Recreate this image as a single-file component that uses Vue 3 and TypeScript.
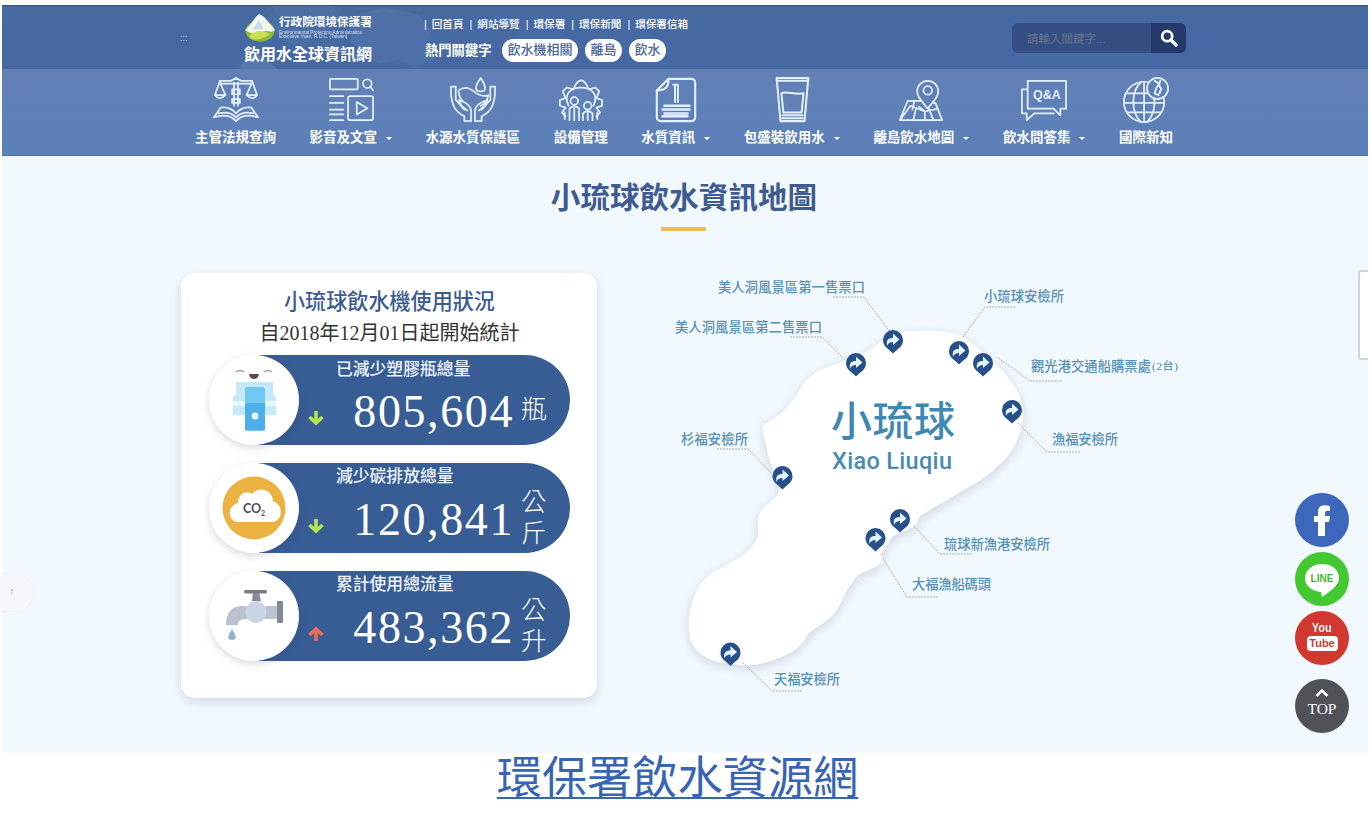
<script setup lang="ts">
interface NavItem { label: string; icon: string; menu: boolean }
interface Stat { label: string; value: string; unit: string; icon: 'machine' | 'co2' | 'tap'; up: boolean }
interface Place { name: string; note?: string; x: number; y: number; w: number; pin: [number, number]; line: string }

const topLinks: string[] = ['回首頁', '網站導覽', '環保署', '環保新聞', '環保署信箱']
const keywords: string[] = ['飲水機相關', '離島', '飲水']

const navItems: NavItem[] = [
  { label: '主管法規查詢', icon: 'law', menu: false },
  { label: '影音及文宣', icon: 'media', menu: true },
  { label: '水源水質保護區', icon: 'hands', menu: false },
  { label: '設備管理', icon: 'gear', menu: false },
  { label: '水質資訊', icon: 'doc', menu: true },
  { label: '包盛裝飲用水', icon: 'glass', menu: true },
  { label: '離島飲水地圖', icon: 'map', menu: true },
  { label: '飲水問答集', icon: 'qa', menu: true },
  { label: '國際新知', icon: 'globe', menu: false },
]

const stats: Stat[] = [
  { label: '已減少塑膠瓶總量', value: '805,604', unit: '瓶', icon: 'machine', up: false },
  { label: '減少碳排放總量', value: '120,841', unit: '公斤', icon: 'co2', up: false },
  { label: '累計使用總流量', value: '483,362', unit: '公升', icon: 'tap', up: true },
]

const places: Place[] = [
  { name: '美人洞風景區第一售票口', x: 718, y: 292, w: 147, pin: [893, 341], line: '833,297 864,297 890,332' },
  { name: '美人洞風景區第二售票口', x: 675, y: 332, w: 147, pin: [856, 364], line: '790,337 822,337 845,360' },
  { name: '小琉球安檢所', x: 984, y: 301, w: 80, pin: [959, 352], line: '1015,307 985,307 963,337' },
  { name: '觀光港交通船購票處', note: '(2台)', x: 1031, y: 371, w: 120, pin: [983, 364], line: '1062,381 1030,381 997,357' },
  { name: '漁福安檢所', x: 1052, y: 444, w: 66, pin: [1012, 411], line: '1080,452 1047,452 1018,423' },
  { name: '杉福安檢所', x: 681, y: 444, w: 67, pin: [782.5, 477], line: '717,449 748,449 771,473' },
  { name: '琉球新漁港安檢所', x: 944, y: 549, w: 106, pin: [900, 520], line: '972,554 940,554 913,525' },
  { name: '大福漁船碼頭', x: 912, y: 589, w: 79, pin: [875.5, 539], line: '938,597 907,597 882,557' },
  { name: '天福安檢所', x: 774, y: 684, w: 66, pin: [730.5, 653.5], line: '802,691 772,691 742,662' },
]
</script>

<template>
  <div class="page">
    <div class="site">
      <header class="top">
        <svg class="world" width="240" height="64" viewBox="0 0 240 64" fill="#7d9bc8">
          <path d="M52 0h58l8 14-12 8-14 4-12 14-18-4-14-12-10-4z" opacity=".1" />
          <path d="M22 52l12-3 10 6 10 9H14z" opacity=".3" />
          <path d="M132 8l28-6 34 6 14 18-8 14 12 12-22 10-16-8-20 4-14-14-14-8z" opacity=".14" />
        </svg>
        <span class="skip">:::</span>
        <div class="brand">
          <div class="brand-row">
            <svg class="logo" width="32" height="28" viewBox="0 0 32 28">
              <ellipse cx="16" cy="17" rx="14.5" ry="10.5" fill="#8dbb35" />
              <path d="M1 16C6 13 9 5 15 0c6 2 9 8 16 16-4 4-8-1-12 2-5 3-13 2-18-2z" fill="#f3f8ef" />
              <path d="M8 16l7-10 5 9z" fill="#c9dfec" />
              <path d="M5 22q8-9 21-2-9 7-18 5z" fill="#c8df54" />
            </svg>
            <div>
              <div class="agency">行政院環境保護署</div>
              <div class="agency-en">Environmental Protection Administration<br>Executive Yuan, R.O.C. (Taiwan)</div>
            </div>
          </div>
          <div class="brand-name">飲用水全球資訊網</div>
        </div>
        <div class="quick">
          <div class="links"><span v-for="l in topLinks" :key="l"><i>|</i>{{ l }}</span></div>
          <div class="hot"><b>熱門關鍵字</b><span v-for="k in keywords" :key="k" class="chip">{{ k }}</span></div>
        </div>
        <div class="search">
          <span>請輸入關鍵字...</span>
          <div class="search-btn">
            <svg width="18" height="18" viewBox="0 0 18 18" fill="none" stroke="#fff"><circle cx="7.2" cy="7.2" r="5" stroke-width="2.7" /><path d="M11 11l5 5" stroke-width="3.2" stroke-linecap="round" /></svg>
          </div>
        </div>
      </header>

      <nav class="nav">
        <div v-for="n in navItems" :key="n.label" class="nav-item">
          <svg class="nav-icon" width="50" height="50" viewBox="0 0 50 50" fill="none" stroke="#e3f0ff" stroke-width="1.8" stroke-linejoin="round" stroke-linecap="round">
            <template v-if="n.icon === 'law'">
              <path d="M8 5h12l5-3 5 3h12M8 8h34M8 6L3 20h11L8 6M42 6l-6 14h11L42 6M3 20q5 6 11 0M36 20q6 6 11 0M23 7v24M27 7v24M21 14h8v5h-8zM21 24h8v4h-8z" />
              <path d="M25 47C20 41 12 40 2 43l7-10c7-1 12 1 16 6 4-5 9-7 16-6l7 10c-10-3-18-2-23 4zM7 39c8-2 14 0 18 4 4-4 10-6 18-4" />
            </template>
            <template v-else-if="n.icon === 'media'">
              <rect x="3" y="3" width="29" height="11" rx="1" /><circle cx="42" cy="8" r="4.5" /><path d="M45 11l3 4M3 21h14M3 28h14M3 35h14M3 40h14M3 46h14" /><rect x="22" y="21" width="26" height="25" rx="2" /><path d="M31 27v13l11-6.500z" />
            </template>
            <template v-else-if="n.icon === 'hands'">
              <path d="M16 47V42C6 37 3 30 2 18V11h5v14l9 10M34 47V42c10-5 13-12 14-24V11h-5v14l-9 10M16 47h7V37c0-7-6-10-13-12l3 6 6 5M34 47h-7V37c0-7 6-10 13-12l-3 6-6 5M10 15c7-5 12-2 16 1 6 5 10 6 15 4-1 5-4 9-8 11M10 15c0 6 2 9 5 12M33 2c-7 10-6 14 0 14s6-5 0-14z" />
            </template>
            <template v-else-if="n.icon === 'gear'">
              <path d="M9 42l-4-4 4-5-6-2v-6l6-2-3-7 4-4 7 2 3-6q5-7 10 0l3 6 7-2 4 4-3 7 6 2v6l-6 2 4 5-4 4" />
              <path d="M12 31C6 18 15 12 25 12s19 6 13 19" />
              <circle cx="18" cy="26" r="4" /><circle cx="32" cy="31" r="4" /><path d="M13 46V34q5-5 10 0v12M18 34v12M27 46v-7q5-5 10 0v7M32 38v8M8 45v-7M42 45v-7" />
            </template>
            <template v-else-if="n.icon === 'doc'">
              <path d="M17 3h24a4 4 0 0 1 4 4v36a4 4 0 0 1-4 4H9a4 4 0 0 1-4-4V15zM17 3c1 8-3 12-12 12" stroke-width="2.200" /><path d="M24 9v18M27 9v18M22 9h5" stroke-width="2" /><path d="M13 31h26M11 35h28M13 39h24M11 42h26" stroke-width="2.600" />
            </template>
            <template v-else-if="n.icon === 'glass'">
              <path d="M9 2h33l-4 45H13zM9 5h33M14 18c5-3 14 2 23 0l-2 20H16zM15 41h21M15 44h21" stroke-width="2.100" />
            </template>
            <template v-else-if="n.icon === 'map'">
              <path d="M25 26H11L3 46h44L40 28h-5M3 46l11-15 15 6 14-3M18 26l-2 9M17 46l3-13M29 46v-9l-6-5M38 46l-5-12" /><path d="M32 34C24 24 21 21 21 16a11 11 0 0 1 22 0c0 5-3 8-11 18z" fill="#607fb7" /><circle cx="32" cy="15" r="4.500" />
            </template>
            <template v-else-if="n.icon === 'qa'">
              <path d="M8 5h40v29h-6v7l-7-7H8zM8 14H2v25h5v7l8-7h20" /><text x="28" y="24" text-anchor="middle" fill="#e3f0ff" stroke="none" class="qa-text">Q&amp;A</text>
            </template>
            <template v-else>
              <circle cx="23" cy="27" r="21" /><path d="M4 18h25M2 28h42M5 38h36M23 6v42M20 6C9 16 9 38 20 48M26 48c8-8 9-20 7-27" /><circle cx="37" cy="13" r="11" fill="#607fb7" /><path d="M34 5q7 3 2 7l-2 6 4 2M40 5q-3 5 1 8l-2 5" stroke-width="2" />
            </template>
          </svg>
          <div class="nav-label">{{ n.label }}<i v-if="n.menu" class="caret" /></div>
        </div>
      </nav>

      <main class="main">
        <h1>小琉球飲水資訊地圖</h1>
        <div class="rule" />

        <section class="card">
          <h2>小琉球飲水機使用狀況</h2>
          <p class="since">自2018年12月01日起開始統計</p>
          <div v-for="s in stats" :key="s.label" class="stat">
            <div class="disc">
              <svg v-if="s.icon === 'machine'" width="90" height="90" viewBox="0 0 90 90">
                <path d="M27 17q4-3 8 0M55 17q4-3 8 0" fill="none" stroke="#9a9da8" stroke-width="1.500" />
                <path d="M40 19h10q-1 5-5 5t-5-5z" fill="#5b4550" />
                <path d="M27 27h37v12l3 3v18H56V32H36v28H24V42l3-3z" fill="#c5e9fa" />
                <path d="M24 46h12v5H24zM56 46h11v5H56z" fill="#e8f8ff" />
                <rect x="36" y="32" width="20" height="44" rx="2" fill="#72c8f4" /><rect x="36" y="48" width="20" height="27" fill="#4eaeea" />
                <circle cx="46" cy="61" r="3.500" fill="#e9faff" />
              </svg>
              <svg v-else-if="s.icon === 'co2'" width="90" height="90" viewBox="0 0 90 90">
                <circle cx="45" cy="45" r="31.500" fill="#ebb242" />
                <path d="M29 59c-10 0-12-16 0-19 0-10 9-13 14-9 7-8 20-5 21 7 12 5 9 21-1 21z" fill="#fff" />
                <text x="45" y="50" text-anchor="middle" class="co2">CO<tspan dy="3" font-size="7">2</tspan></text>
              </svg>
              <svg v-else width="90" height="90" viewBox="0 0 90 90">
                <path d="M17 54c0-14 7-20 18-19h33v13H39c-7 0-10 1-10 6z" fill="#b9c2ce" /><ellipse cx="47" cy="41" rx="10.500" ry="11" fill="#c9d4e5" />
                <path d="M44 21h6l2 9H43z" fill="#878c98" /><rect x="35" y="19" width="23" height="3.500" rx="1.700" fill="#777b85" />
                <rect x="68" y="30" width="6" height="22" rx="1" fill="#848994" />
                <path d="M23 58c-5 7-5 11 0 11s5-4 0-11z" fill="#91b5d1" />
              </svg>
            </div>
            <div class="stat-body">
              <div class="stat-label">{{ s.label }}</div>
              <div class="stat-row">
                <svg class="arrow" width="16" height="16" viewBox="0 0 16 16" fill="none" :stroke="s.up ? '#ea6f58' : '#b2e64d'" stroke-width="3.600">
                  <path :d="s.up ? 'M8 15V4M1.500 9L8 3l6.500 6' : 'M8 1v11M1.500 7L8 13l6.500-6'" />
                </svg>
                <div class="stat-value">{{ s.value }}</div>
                <div class="stat-unit">{{ s.unit }}</div>
              </div>
            </div>
          </div>
        </section>
      </main>

      <svg class="island" width="600" height="460" viewBox="640 250 600 460">
        <path
          class="land"
          d="M762 426C775 419 784 412 790 403C797 397 802 383 810 377C820 367 840 364 853 358C867 353 876 345 890 335C900 330 943 329 960 335C971 340 982 352 989 359C1001 367 1008 377 1015 387C1023 400 1025 413 1022 427C1017 443 1010 457 999 465C985 480 966 488 947 500L920 516C917 520 919 524 913 527L893 536L880 555C886 558 885 562 873 568C864 573 859 573 854 580C846 590 842 603 836 611C830 620 816 627 808 634C805 641 798 649 790 653C775 661 755 667 740 665C729 663 721 664 712 660C702 657 695 650 691 641C687 628 689 611 693 599C698 587 703 578 716 571C733 561 747 556 755 542C761 534 757 528 758 520C759 508 771 504 778 494L782 483C770 473 766 446 762 426Z"
        />
        <g v-for="p in places" :key="p.name">
          <polyline :points="p.line" class="leader" />
          <g :transform="`translate(${p.pin[0]} ${p.pin[1]})`">
            <path d="M0 12.500C-4 8-10 6-10-1a10 10 0 0 1 20 0C10 6 4 8 0 12.500z" fill="#27508a" />
            <path d="M-6 5c-1-6 1-8 6-8v-4.500L6.500-1.500 0 4V1c-3 0-5 1-6 4z" fill="#e4f6ff" />
          </g>
          <text :x="p.x" :y="p.y" :textLength="p.w" class="place">{{ p.name }}</text>
          <text v-if="p.note" :x="p.x + p.w + 1" :y="p.y - 1" textLength="26" class="note">{{ p.note }}</text>
        </g>
        <text x="831" y="436" textLength="124" class="isle-zh">小琉球</text>
        <text x="832" y="469" textLength="120" lengthAdjust="spacing" class="isle-en">Xiao Liuqiu</text>
      </svg>

      <div class="side-tab" />
      <div class="side-dot">↑</div>
      <div class="social">
        <div class="round fb"><svg width="54" height="54" viewBox="0 0 54 54"><path d="M23 43V29h-4v-6h4v-4c0-6 4-8 12-6v5c-4-1-5 0-5 3v2h5l-1 6h-4v14z" fill="#fff" /></svg></div>
        <div class="round line">
          <svg width="54" height="54" viewBox="0 0 54 54"><path d="M27 12c10 0 17 6 17 14 0 7-7 12-17 19l-1-5c-9-1-16-6-16-14 0-8 8-14 17-14z" fill="#fff" /><text x="27" y="30" text-anchor="middle" textLength="23" class="line-text">LINE</text></svg>
        </div>
        <div class="round yt"><span>You</span><b>Tube</b></div>
        <div class="round to-top"><svg width="14" height="9" viewBox="0 0 14 9" fill="none" stroke="#fff" stroke-width="2.600"><path d="M1.500 8L7 2.500 12.500 8" /></svg><span>TOP</span></div>
      </div>
    </div>
    <a class="caption">環保署飲水資源網</a>
  </div>
</template>

<style>
body { margin: 0; background: #fff; }
</style>

<style scoped>
.page { width: 1370px; height: 818px; overflow: hidden; box-sizing: border-box; padding-top: 5px; font-family: "Liberation Serif", "Noto Sans CJK TC", serif; background: #fff; display: flex; flex-direction: column; align-items: center; }
.site { position: relative; width: 1366px; height: 748px; background: #f2f9fe; flex: none; }
.top { position: relative; height: 64px; box-sizing: border-box; border-top: 1px solid #3c5280; background: linear-gradient(#456b9d, #4669a3 30%); display: flex; align-items: flex-start; padding-left: 178px; font-family: "Liberation Sans", "Noto Sans CJK TC", sans-serif; }
.world { position: absolute; left: 362px; top: 0; margin-left: -140px; }
.skip { color: #c7d5ec; font-size: 9px; margin-top: 27px; width: 64px; }
.brand { position: relative; width: 132px; margin-top: 8px; color: #fff; white-space: nowrap; }
.brand-row { display: flex; gap: 3px; height: 30px; }
.logo { flex: none; }
.agency { font-size: 11.6px; line-height: 16px; font-weight: 700; }
.agency-en { font-size: 10px; line-height: 10px; transform: scale(.47); transform-origin: 0 0; width: 196px; height: 10px; color: #d7e2f2; }
.brand-name { font-size: 16px; line-height: 22px; font-weight: 700; }
.quick { position: relative; margin: 8px 0 0 48px; color: #fff; width: 588px; white-space: nowrap; }
.links { display: flex; font-size: 10.6px; line-height: 20px; font-weight: 500; }
.links span { margin-right: 6px; }
.links i { font-style: normal; font-weight: 400; margin-right: 5px; }
.hot { display: flex; align-items: center; height: 24px; margin-top: 4px; font-size: 13.3px; }
.hot b { width: 78px; position: relative; top: -1px; left: 1px; }
.chip { background: #fff; color: #48659a; font-weight: 500; font-size: 13px; line-height: 22px; height: 23px; padding: 0 5.5px; border-radius: 12px; margin-right: 7px; }
.search { margin-top: 17px; width: 174px; height: 30px; border-radius: 6px; background: #354f82; display: flex; align-items: center; justify-content: space-between; overflow: hidden; }
.search span { margin-left: 15px; font-size: 11.5px; color: #68748b; }
.search-btn { width: 35px; height: 30px; background: #233a6b; display: flex; align-items: center; justify-content: center; }
.nav { position: relative; height: 87px; box-sizing: border-box; padding: 7px 195px 0 193px; display: flex; justify-content: space-between; background: linear-gradient(#6280b6, #5c80b9); border-bottom: 1px solid #54709f; }
.nav-item { display: flex; flex-direction: column; align-items: center; color: #fff; }
.nav-icon { width: 48px; height: 48px; }
.nav-label { font-size: 13.5px; font-weight: 700; line-height: 20px; margin-top: 4px; display: flex; align-items: center; white-space: nowrap; }
.caret { border: 3.5px solid transparent; border-top-color: #fff; border-bottom: 0; margin-left: 9px; }
.qa-text { font: 700 13px "Liberation Sans", sans-serif; }
.main { height: 597px; overflow: hidden; }
h1 { margin: 20px 0 0; padding-right: 2px; text-align: center; color: #3f5c91; font-size: 29.6px; line-height: 44px; font-weight: 700; }
.rule { width: 45px; height: 4px; margin: 7px 0 0 659px; background: #edbf50; }
.card { margin: 42px 0 0 179px; width: 416px; height: 425px; box-sizing: border-box; padding: 15px 27px 0 28px; border-radius: 14px; background: #fff; box-shadow: 0 4px 12px rgba(70, 90, 120, .2); }
h2 { margin: 0; text-align: center; font-size: 21.1px; line-height: 28px; font-weight: 500; color: #3b5b92; }
.since { margin: 2px 0 7px; text-align: center; font-size: 20px; line-height: 30px; color: #333; white-space: nowrap; }
.stat { display: flex; height: 90px; margin-bottom: 18px; border-radius: 45px; background: linear-gradient(90deg, transparent 50px, #385d95 50px); color: #fff; }
.disc { width: 90px; height: 90px; flex: none; border-radius: 50%; background: #fff; box-shadow: 0 3px 8px rgba(40, 50, 80, .18); }
.stat-body { flex: 1; }
.stat-label { padding-left: 37px; height: 26px; line-height: 27px; font-size: 16.8px; color: #eef3fb; font-weight: 500; }
.stat:nth-of-type(1) .stat-label { line-height: 30px; }
.stat-row { display: flex; align-items: center; height: 62px; }
.arrow { margin: 12px 0 0 9px; }
.stat-value { width: 190px; text-align: right; font-size: 46px; line-height: 60px; letter-spacing: 1.6px; }
.stat-unit { width: 26px; margin: 0 0 5px 7px; font-size: 25.5px; line-height: 31px; font-weight: 300; word-break: break-all; }
.co2 { font: 700 12.5px Lato, sans-serif; fill: #4c4c57; }
.island { position: absolute; left: 638px; top: 245px; }
.land { fill: #fff; filter: drop-shadow(0 3px 6px rgba(60, 70, 110, .2)); }
.leader { fill: none; stroke: #9dafc2; stroke-width: 1; stroke-dasharray: 2 1; }
.place { font: 500 13.3px "Noto Sans CJK TC", sans-serif; fill: #5590b6; }
.note { font: 400 11px "Liberation Serif", "Noto Sans CJK TC", serif; fill: #4383ac; }
.isle-zh { font: 500 41px "Liberation Sans", "Noto Sans CJK TC", sans-serif; fill: #3f88b1; }
.isle-en { font: 500 23.5px Roboto, sans-serif; fill: #4a8bb2; }
.side-tab { position: absolute; right: 0; top: 265px; width: 10px; height: 90px; box-sizing: border-box; border: 2px solid #cfd5dc; border-right: 0; background: #fff; border-radius: 3px 0 0 3px; }
.side-dot { position: absolute; left: -2px; top: 570px; width: 33px; height: 36px; border-radius: 0 17px 17px 0; background: #f5f7fc; box-shadow: 0 0 3px rgba(80, 90, 120, .1); color: #999fab; font-size: 11px; line-height: 33px; text-indent: 9px; }
.social { position: absolute; right: 19px; top: 488px; display: flex; flex-direction: column; gap: 5px; }
.round { width: 54px; height: 54px; border-radius: 50%; display: flex; flex-direction: column; align-items: center; color: #fff; }
.fb { background: #3c67ba; }
.line { background: #43c832; }
.line-text { font: 700 10px "Liberation Sans", sans-serif; fill: #43b535; }
.yt { background: #d1382f; font-family: "Liberation Sans", sans-serif; font-weight: 700; }
.yt span { font-size: 13px; line-height: 14px; margin-top: 10px; transform: scaleX(.85); }
.yt b { background: #fff; color: #d1382f; font-size: 11px; line-height: 15px; width: 31px; text-align: center; border-radius: 4px; margin-top: 1px; }
.to-top { background: #505257; margin-top: 9px; }
.to-top svg { margin-top: 9px; }
.to-top span { font-size: 15.5px; line-height: 17px; margin-top: 3px; }
.caption { margin-top: -3px; margin-right: 15px; font-family: "Noto Sans CJK TC", sans-serif; font-weight: 400; font-size: 45.2px; line-height: 50px; color: #3864b4; text-decoration: underline; text-decoration-thickness: 2px; text-underline-offset: 3px; white-space: nowrap; }
</style>
